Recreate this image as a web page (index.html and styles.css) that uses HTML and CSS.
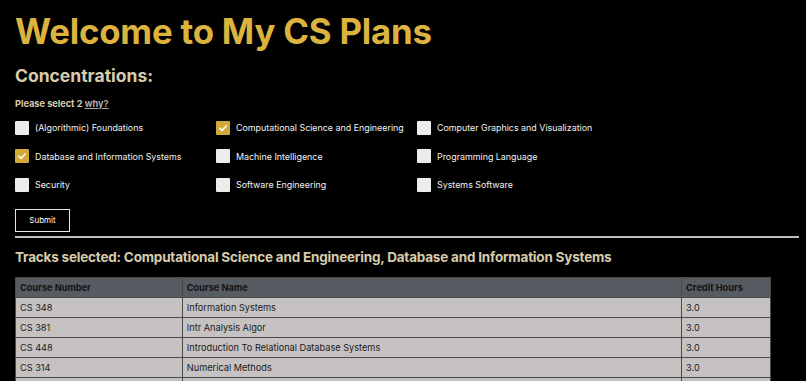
FILE: index.html
```html
<!DOCTYPE html>
<html>
<head>
<meta charset="utf-8">
<link rel="stylesheet" href="styles.css">
</head>
<body>
<div class="page">
  <h1 class="title">Welcome to My CS Plans</h1>
  <h2 class="subtitle">Concentrations:</h2>
  <p class="hint">Please select 2 <a class="why" href="#">why?</a></p>
  <div class="grid">
    <label class="opt"><span class="box"></span>(Algorithmic) Foundations</label>
    <label class="opt"><span class="box on"><svg viewBox="0 0 14 14" width="14" height="14"><path d="M3.8 7.3 L6 9.4 L10.2 4.9" fill="none" stroke="#fff" stroke-width="1.5" stroke-linecap="round" stroke-linejoin="round"/></svg></span>Computational Science and Engineering</label>
    <label class="opt"><span class="box"></span>Computer Graphics and Visualization</label>
    <label class="opt"><span class="box on"><svg viewBox="0 0 14 14" width="14" height="14"><path d="M3.8 7.3 L6 9.4 L10.2 4.9" fill="none" stroke="#fff" stroke-width="1.5" stroke-linecap="round" stroke-linejoin="round"/></svg></span>Database and Information Systems</label>
    <label class="opt"><span class="box"></span>Machine Intelligence</label>
    <label class="opt"><span class="box"></span>Programming Language</label>
    <label class="opt"><span class="box"></span>Security</label>
    <label class="opt"><span class="box"></span>Software Engineering</label>
    <label class="opt"><span class="box"></span>Systems Software</label>
  </div>
  <button class="submit">Submit</button>
  <div class="rule"></div>
  <h3 class="tracks">Tracks selected: Computational Science and Engineering, Database and Information Systems</h3>
  <table class="courses">
    <thead>
      <tr><th class="c1">Course Number</th><th class="c2">Course Name</th><th class="c3">Credit Hours</th></tr>
    </thead>
    <tbody>
      <tr><td>CS 348</td><td>Information Systems</td><td>3.0</td></tr>
      <tr><td>CS 381</td><td>Intr Analysis Algor</td><td>3.0</td></tr>
      <tr><td>CS 448</td><td>Introduction To Relational Database Systems</td><td>3.0</td></tr>
      <tr><td>CS 314</td><td>Numerical Methods</td><td>3.0</td></tr>
      <tr><td></td><td></td><td></td></tr>
    </tbody>
  </table>
</div>
</body>
</html>
```
FILE: styles.css
```css
html, body {
  margin: 0;
  padding: 0;
  background: #000;
}
body {
  font-family: Inter, "Liberation Sans", sans-serif;
  overflow: hidden;
  height: 381px;
}
.page {
  padding: 11px 7px 0 15px;
}
.title {
  margin: 0;
  font-size: 34.8px;
  font-weight: 700;
  color: #dbb33e;
  line-height: 40px;
  letter-spacing: -0.2px;
}
.subtitle {
  margin: 14px 0 0;
  font-size: 17.5px;
  font-weight: 700;
  color: #d6ccad;
  line-height: 22px;
}
.hint {
  margin: 11px 0 0;
  font-size: 9.2px;
  font-weight: 700;
  color: #d6ccad;
  line-height: 12px;
}
.why {
  color: #a9a9a9;
  text-decoration: underline;
}
.grid {
  margin-top: 10px;
  display: grid;
  grid-template-columns: 201px 201px 201px;
  row-gap: 13.5px;
}
.opt {
  display: flex;
  align-items: center;
  gap: 6px;
  font-size: 8.9px;
  color: #f2f2f2;
  height: 15px;
}
.box {
  width: 14px;
  height: 14px;
  background: #ececec;
  border-radius: 1px;
  flex: none;
  display: flex;
}
.box.on {
  background: #d0a93a;
}
.submit {
  margin-top: 16.5px;
  display: block;
  width: 55px;
  height: 23px;
  background: #000;
  color: #fff;
  border: 1px solid #e6e6e6;
  font-family: Inter, "Liberation Sans", sans-serif;
  font-size: 8px;
  padding: 0;
}
.rule {
  margin-top: 4px;
  height: 2px;
  background: #bdbdbd;
}
.tracks {
  margin: 9px 0 0;
  font-size: 13.5px;
  font-weight: 700;
  color: #d6ccad;
  line-height: 20px;
  letter-spacing: -0.2px;
}
.courses {
  margin-top: 10px;
  width: 756px;
  border-collapse: collapse;
  font-size: 9.2px;
}
.courses th, .courses td {
  border: 1px solid #4a4a4a;
  height: 19px;
  padding: 0 4px;
  text-align: left;
}
.courses th {
  background: #575b62;
  color: #141414;
  font-weight: 700;
}
.courses td {
  background: #c6c2c2;
  color: #1a1a1a;
}
.c1 { width: 158px; }
.c2 { width: 491px; }
.c3 { width: 80px; }
```
